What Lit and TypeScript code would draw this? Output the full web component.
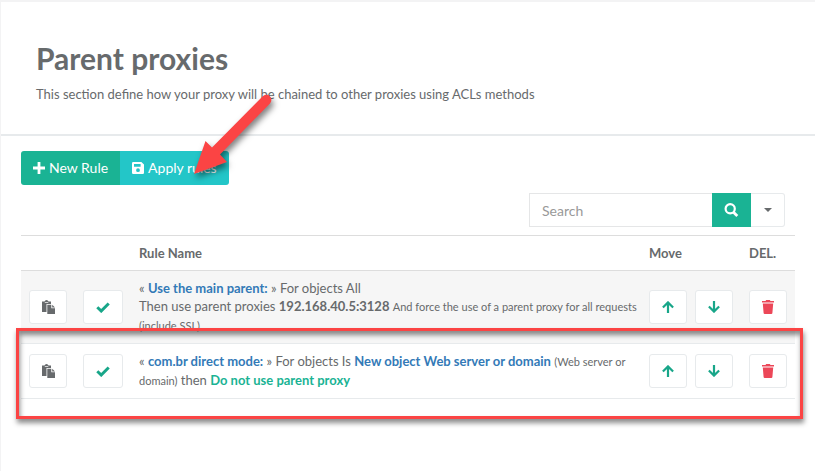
import { LitElement, html, css, svg, nothing } from "lit";
import { customElement, property, state } from "lit/decorators.js";

const icons: Record<string, { box: string; body: unknown }> = {
  plus: { box: "0 0 12 12", body: svg`<path d="M4.6 0h2.8v4.6H12v2.8H7.4V12H4.6V7.4H0V4.6h4.6z"/>` },
  save: {
    box: "0 0 12 12",
    body: svg`<path fill-rule="evenodd" d="M1.2 0H9.4L12 2.600V10.800Q12 12 10.800 12H1.200Q0 12 0 10.800V1.200Q0 0 1.200 0zM2 1.900V4.800H8.600V1.900zM6 6.300A1.900 1.900 0 1 0 6 10.100A1.900 1.900 0 1 0 6 6.300z"/>`,
  },
  search: {
    box: "0 0 15 15",
    body: svg`<circle cx="6.200" cy="5.800" r="4.600" fill="none" stroke="currentColor" stroke-width="2.200"/><path d="M9.500 9.200L13.300 13" stroke="currentColor" stroke-width="2.800"/>`,
  },
  caret: { box: "0 0 8 4", body: svg`<path d="M0 0H8L4 4z"/>` },
  paste: {
    box: "0 0 13 14",
    body: svg`<path d="M0 1.500H2.500Q3 0 4.500 0T6.500 1.500H9V4H4.500V12H0z"/><path d="M5.300 4.800H9.300V8.200H13V14H5.300z"/><path d="M10.200 4.800L13 7.400H10.200z"/><path d="M2.800 2.500H6.300" stroke="#fff" stroke-width=".7"/>`,
  },
  check: { box: "0 0 14 11", body: svg`<path d="M1.300 5.200L5.200 9L12.700 1.500" fill="none" stroke="currentColor" stroke-width="3"/>` },
  up: { box: "0 0 12 12", body: svg`<path d="M6 12V1.600M.900 6.500L6 1.400L11.100 6.500" fill="none" stroke="currentColor" stroke-width="2.200"/>` },
  down: { box: "0 0 12 12", body: svg`<path d="M6 0V10.400M.900 5.500L6 10.600L11.100 5.500" fill="none" stroke="currentColor" stroke-width="2.200"/>` },
  trash: { box: "0 0 12 14", body: svg`<path d="M0 1H3.500L4.200 0H7.800L8.500 1H12V2.600H0zM.800 3.500H11.200L10.400 13Q10.300 14 9.300 14H2.700Q1.700 14 1.600 13z"/>` },
};

function icon(name: string) {
  const { box, body } = icons[name];
  return html`<svg class="icon ${name}" viewBox=${box} fill="currentColor" aria-hidden="true">${body}</svg>`;
}

interface Rule {
  name: string;
  description: unknown;
}

@customElement("rule-table")
export class RuleTable extends LitElement {
  static styles = css`
    table {
      width: 100%;
      table-layout: fixed;
      border-collapse: collapse;
      line-height: 18px;
    }
    .copy { width: 54px; }
    .enable { width: 56px; }
    .move { width: 100px; }
    .remove { width: 54px; }
    th,
    td {
      box-sizing: border-box;
      padding: 8px;
      text-align: left;
      vertical-align: middle;
    }
    th {
      border-top: 1px solid #ddd;
      border-bottom: 1px solid #ddd;
      font-weight: 700;
    }
    td { border-bottom: 1px solid #e7eaec; }
    .text { padding-right: 0; }
    .odd { background: #f6f6f6; }
    .buttons { display: flex; gap: 8px; }
    button {
      flex: 1;
      height: 34px;
      padding: 0;
      display: flex;
      align-items: center;
      justify-content: center;
      color: #676a6c;
      background: #fff;
      border: 1px solid #e7eaec;
      border-radius: 3px;
      cursor: pointer;
    }
    .green { color: #1ab394; }
    button.green { color: #18a689; }
    button.red { color: #ec4758; }
    a { color: #337ab7; font-weight: 700; text-decoration: none; }
    small { font-size: 11px; }
    .paste { width: 13px; height: 14px; }
    .check { width: 14px; height: 11px; }
    .up, .down { width: 12px; height: 12px; }
    .trash { width: 12px; height: 14px; }
  `;

  @property({ attribute: false }) rules: Rule[] = [];

  private button(glyph: string, label: string, tone = "") {
    return html`<button type="button" class=${tone || nothing} aria-label=${label}>${icon(glyph)}</button>`;
  }

  render() {
    return html`
      <table>
        <colgroup>
          <col class="copy" /><col class="enable" /><col /><col class="move" /><col class="remove" />
        </colgroup>
        <thead>
          <tr><th></th><th></th><th scope="col">Rule Name</th><th scope="col">Move</th><th scope="col">DEL.</th></tr>
        </thead>
        <tbody>
          ${this.rules.map(
            (rule, i) => html`
              <tr class=${i % 2 ? "even" : "odd"}>
                <td><div class="buttons">${this.button("paste", "Duplicate")}</div></td>
                <td><div class="buttons">${this.button("check", "Enable", "green")}</div></td>
                <td class="text">« <a href="#">${rule.name}</a> » ${rule.description}</td>
                <td>
                  <div class="buttons">
                    ${this.button("up", "Move up", "green")}${this.button("down", "Move down", "green")}
                  </div>
                </td>
                <td><div class="buttons">${this.button("trash", "Delete", "red")}</div></td>
              </tr>
            `,
          )}
        </tbody>
      </table>
    `;
  }
}

@customElement("app-root")
export class AppRoot extends LitElement {
  static styles = css`
    :host {
      display: block;
      position: relative;
      box-sizing: border-box;
      min-height: 100vh;
      overflow: hidden;
      border-top: 2px solid #f3f3f4;
      border-left: 1px solid #f3f3f4;
      background: #fff;
      color: #676a6c;
      font: 13px/18px Lato, "Liberation Sans", sans-serif;
    }
    header {
      padding: 38px 35px 31px;
      border-bottom: 2px solid #e7eaec;
    }
    h1 {
      margin: 0 0 8px;
      font-size: 30px;
      line-height: 37px;
      font-weight: 700;
    }
    p { margin: 0; }
    main { padding: 15px 20px; }
    button, input { font: inherit; font-size: 14px; }
    button {
      display: flex;
      align-items: center;
      justify-content: center;
      gap: 4px;
      height: 34px;
      padding: 0 12px;
      border: 0;
      color: #fff;
      background: #1ab394;
      cursor: pointer;
    }
    .toolbar { display: flex; }
    .new { border-radius: 3px 0 0 3px; }
    .apply { background: #23c6c8; border-radius: 0 3px 3px 0; }
    .search-row {
      display: flex;
      justify-content: flex-end;
      padding: 8px 10px;
    }
    input {
      box-sizing: border-box;
      width: 183px;
      height: 34px;
      padding: 0 12px;
      border: 1px solid #e5e6e7;
      border-right: 0;
      border-radius: 0;
      color: inherit;
      outline: none;
    }
    input::placeholder { color: #999; opacity: 1; }
    .go { width: 39px; }
    .more {
      width: 34px;
      color: #676a6c;
      background: #fff;
      border: 1px solid #e7eaec;
      border-left: 0;
      border-radius: 0 3px 3px 0;
    }
    .plus, .save { width: 12px; height: 12px; }
    .search { width: 15px; height: 15px; flex: none; }
    .caret { width: 8px; height: 4px; flex: none; }
    .frame {
      position: absolute;
      top: 326px;
      left: 15px;
      right: 12px;
      height: 85px;
      border: 3px solid #fb4444;
      box-shadow: 1px 4px 5px rgba(0, 0, 0, 0.45), inset 1px 4px 5px rgba(0, 0, 0, 0.45);
      pointer-events: none;
    }
    .arrow {
      position: absolute;
      top: 78px;
      left: 179px;
      width: 110px;
      height: 120px;
      filter: drop-shadow(2px 4px 3px rgba(0, 0, 0, 0.5));
      pointer-events: none;
    }
  `;

  @state() private rules: Rule[] = [
    {
      name: "Use the main parent:",
      description: html`For objects All<br />Then use parent proxies <b>192.168.40.5:3128</b>
        <small>And force the use of a parent proxy for all requests (include SSL)</small>`,
    },
    {
      name: "com.br direct mode:",
      description: html`For objects Is <a href="#">New object Web server or domain</a>
        <small>(Web server or domain)</small> then <b class="green">Do not use parent proxy</b>`,
    },
  ];

  render() {
    return html`
      <header>
        <h1>Parent proxies</h1>
        <p>This section define how your proxy will be chained to other proxies using ACLs methods</p>
      </header>
      <main>
        <div class="toolbar">
          <button type="button" class="new">${icon("plus")}New Rule</button>
          <button type="button" class="apply">${icon("save")}Apply rules</button>
        </div>
        <div class="search-row">
          <input type="text" placeholder="Search" aria-label="Search" />
          <button type="button" class="go" aria-label="Run search">${icon("search")}</button>
          <button type="button" class="more" aria-label="Search options">${icon("caret")}</button>
        </div>
        <rule-table .rules=${this.rules}></rule-table>
      </main>
      <div class="frame"></div>
      <svg class="arrow" viewBox="180 80 110 120" aria-hidden="true">
        <path fill="#fb4444" d="M194 174L205.500 141L212 147.500L262.500 96.500A5 5 0 0 1 270 103.500L220 154.500L227 162z" />
      </svg>
    `;
  }
}
